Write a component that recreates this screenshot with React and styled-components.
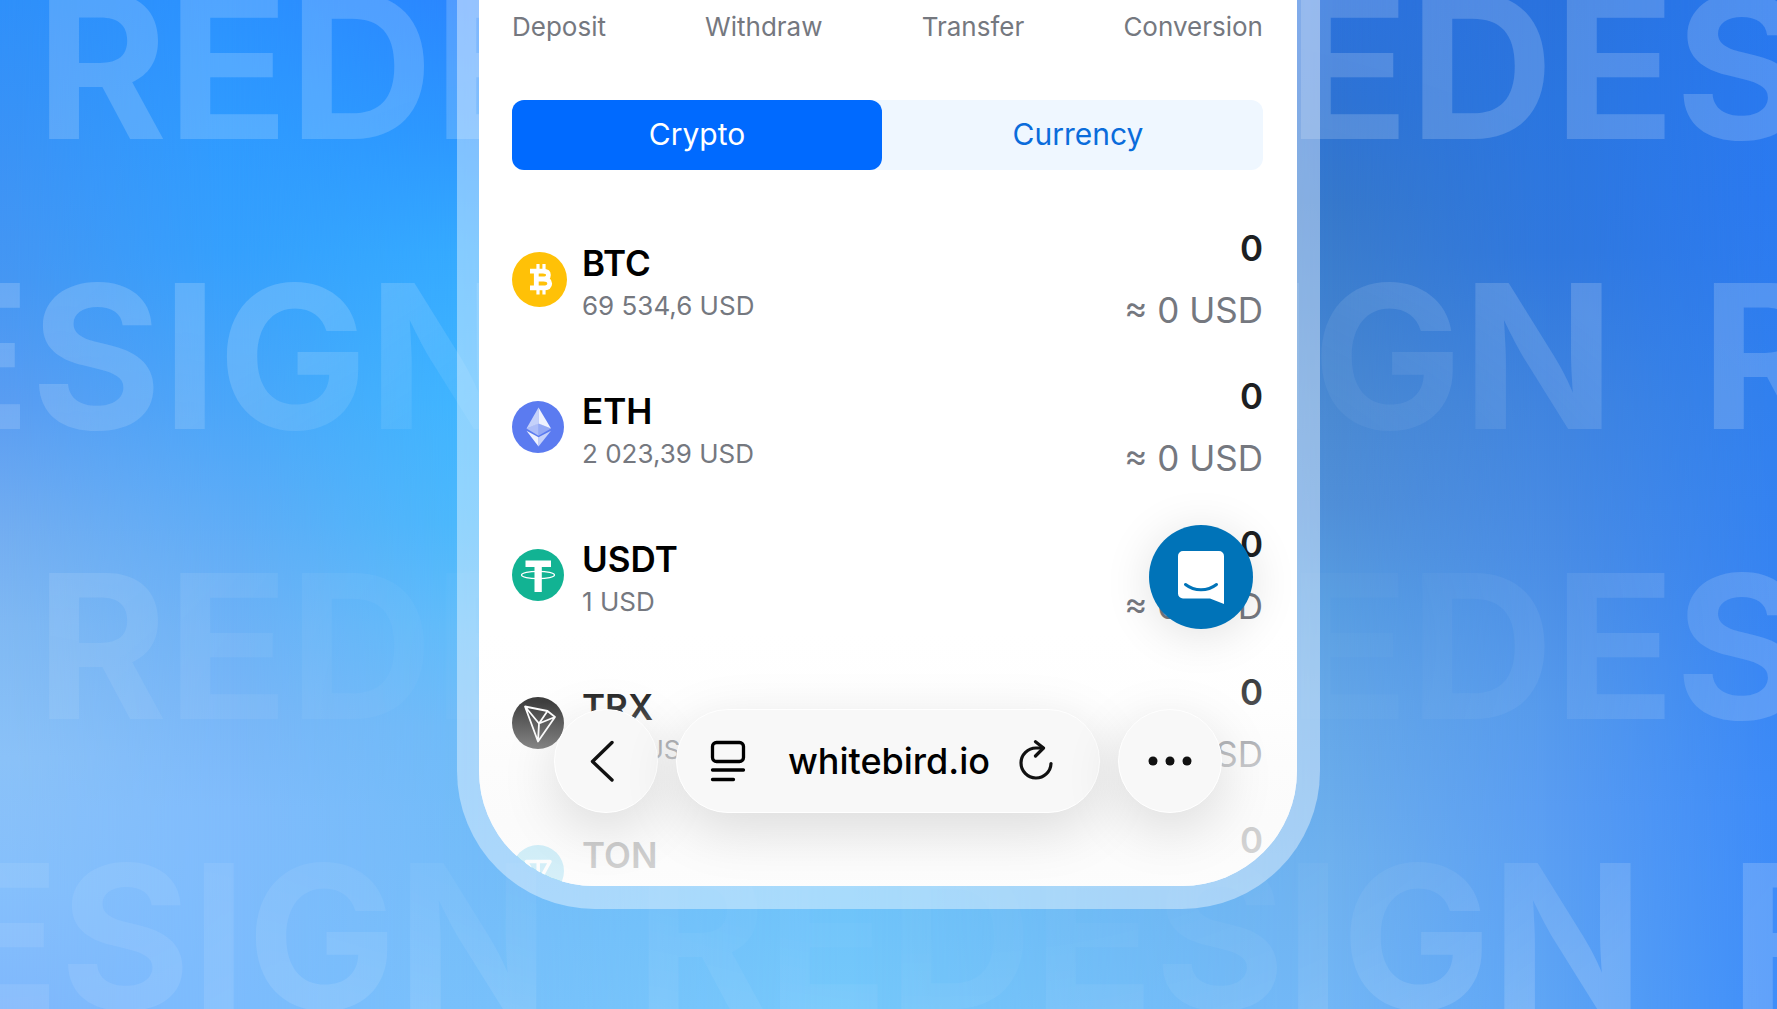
import { useState } from 'react';
import styled, { createGlobalStyle } from 'styled-components';

const GlobalStyle = createGlobalStyle`
	* {
		box-sizing: border-box;
	}

	body {
		margin: 0;
		font-family: Inter, 'Liberation Sans', sans-serif;
		background: #3c8cf8;
	}

	button {
		padding: 0;
		border: 0;
		background: none;
		font: inherit;
		cursor: pointer;
	}
`;

const actions = ['Deposit', 'Withdraw', 'Transfer', 'Conversion'];
const tabs = ['Crypto', 'Currency'];

const BtcIcon = () => (
	<svg width="55" height="55" viewBox="0 0 55 55" aria-hidden="true">
		<circle cx="27.5" cy="27.5" r="27.5" fill="#ffc107" />
		<g fill="none" stroke="#fff" strokeWidth="4.8">
			<path d="M18 19.200h13c3.600 0 5.400 1.400 5.400 3.900s-1.800 3.900-5.400 3.900h-6.500M18 35.800h13.500c4 0 6.200-1.600 6.200-4.400s-2.200-4.400-6.200-4.400h-7M24.300 19v17" />
			<path d="M26 12v6M32 12v6M26 37v5.500M32 37v5.500" strokeWidth="3.200" />
		</g>
	</svg>
);

const EthIcon = () => (
	<svg width="52" height="52" viewBox="0 0 52 52" aria-hidden="true">
		<circle cx="26" cy="26" r="26" fill="#5b7bf0" />
		<path fill="#fff" fillOpacity="0.65" d="M26.500 6.500v16L14.500 27.500z" />
		<path fill="#fff" fillOpacity="0.9" d="M26.500 6.500l12.500 21-12.500-5z" />
		<path fill="#fff" fillOpacity="0.5" d="M14.500 27.500l12-5.300v12.500z" />
		<path fill="#fff" fillOpacity="0.35" d="M39 27.500l-12.500-5.300v12.500z" />
		<path fill="#fff" fillOpacity="0.9" d="M14.500 29.700l12 6.500v9.300z" />
		<path fill="#fff" fillOpacity="0.65" d="M39 29.700l-12.500 6.500v9.300z" />
	</svg>
);

const UsdtIcon = () => (
	<svg width="52" height="52" viewBox="0 0 52 52" aria-hidden="true">
		<circle cx="26" cy="26" r="26" fill="#12b393" />
		<ellipse cx="26" cy="26" rx="16.500" ry="3.600" fill="none" stroke="#fff" strokeWidth="1.300" />
		<path fill="#fff" d="M13.500 11.500h25.500v6.500h-9.200v25H22.500v-25h-9z" />
	</svg>
);

const TrxIcon = () => (
	<svg width="52" height="52" viewBox="0 0 52 52" aria-hidden="true">
		<circle cx="26" cy="26" r="26" fill="#111" />
		<path
			d="M13 9.500l22.500 4.500 7.500 6-17 24.500zM13 9.500l14 17L26 44.500M27 26.500l8.500-12.500M27 26.500l16-6.500"
			fill="none"
			stroke="#fff"
			strokeWidth="1.800"
			strokeLinejoin="round"
		/>
	</svg>
);

const TonIcon = () => (
	<svg width="52" height="52" viewBox="0 0 52 52" aria-hidden="true">
		<circle cx="26" cy="26" r="26" fill="#12b0e6" />
		<path
			d="M14.500 16.500h23.500L26.200 38zM26.200 16.500V38"
			fill="none"
			stroke="#fff"
			strokeWidth="3.500"
			strokeLinejoin="round"
		/>
	</svg>
);

const coins = [
	{ name: 'BTC', rate: '69 534,6 USD', Icon: BtcIcon },
	{ name: 'ETH', rate: '2 023,39 USD', Icon: EthIcon },
	{ name: 'USDT', rate: '1 USD', Icon: UsdtIcon },
	{ name: 'TRX', rate: '0,29 USD', Icon: TrxIcon },
	{ name: 'TON', rate: '1,32 USD', Icon: TonIcon },
];

const Stage = styled.div`
	position: relative;
	display: flex;
	justify-content: center;
	height: 100vh;
	padding-bottom: 100px;
	overflow: hidden;
`;

// Vertical gradients blended into each other from left to right
const Backdrop = styled.div`
	position: absolute;
	inset: 0;
	background: linear-gradient(
		#2f90fa,
		#3b93f6 15%,
		#4697f3 28%,
		#5a9df2 40%,
		#72adf1 52%,
		#80b9f3 62%,
		#8bc2f8 75%,
		#86c0fc 88%,
		#80b8fc
	);
`;

const Blend = styled.div`
	position: absolute;
	inset: 0;
	background: linear-gradient(${({ $colors }) => $colors});
	mask-image: linear-gradient(
		90deg,
		transparent ${({ $from }) => $from}%,
		#000 ${({ $to }) => $to}%
	);
`;

const blends = [
	{
		from: 0,
		to: 13,
		colors: '#2b92ff, #2f9bff 13%, #35a0fd 25%, #4aa6f9 40%, #64aef6 55%, #78b6f7 70%, #80bcfc 80%, #7cbcfd',
	},
	{
		from: 13,
		to: 26,
		colors: '#2a86ff, #2c97ff 13%, #35aaff 25%, #40b5ff 40%, #4bb8fc 52%, #60bcfa 62%, #6fbbf8 72%, #74bcf9 85%, #78c0fb',
	},
	{
		from: 26,
		to: 48,
		colors: '#2a80f0, #2f90f0 25%, #4aa8f4 50%, #66bef8 75%, #75c8fb',
	},
	{
		from: 48,
		to: 75,
		colors: '#2c72dc, #2e73d4 10%, #3678cc 20%, #3f80cf 30%, #4a89d2 40%, #508fd8 50%, #589de2 60%, #64a6e8 70%, #6eb0ee 85%, #72b6f6',
	},
	{
		from: 75,
		to: 87,
		colors: '#2a72de, #2b76e0 10%, #3078de 25%, #4084df 40%, #4a8de5 55%, #569aec 70%, #5a9df2 80%, #5ea5f5',
	},
	{
		from: 87,
		to: 100,
		colors: '#2878ee, #2b7af0 20%, #3180ee 40%, #3784f2 60%, #3d8bf8 80%, #3f8ef9',
	},
];

const Words = styled.div`
	position: absolute;
	inset: 0;
	overflow: hidden;
	color: rgba(255, 255, 255, 0.18);
	font-size: 200px;
	font-weight: 700;
	line-height: 290px;
	mask-image: radial-gradient(
			ellipse 60% 66% at 53% 64%,
			rgba(0, 0, 0, 0.12) 44%,
			rgba(0, 0, 0, 0.4) 60%,
			rgba(0, 0, 0, 0.95) 78%,
			#000
		),
		radial-gradient(ellipse 40% 50% at 0 80%, rgba(0, 0, 0, 0.45) 30%, #000);
	mask-composite: intersect;
`;

const WordLine = styled.div`
	display: flex;
	gap: ${({ $gap }) => $gap}px;
	margin-left: ${({ $shift }) => $shift}px;

	&:first-child {
		margin-top: -79px;
	}
`;

const wordLines = [
	{ shift: 36, gap: 112, words: 2 },
	{ shift: -488, gap: 86, words: 3 },
	{ shift: 36, gap: 112, words: 2 },
	{ shift: -459, gap: 86, words: 3 },
];

const Phone = styled.main`
	position: relative;
	display: flex;
	width: 863px;
	padding: 0 23px 23px 22px;
	border-radius: 0 0 138px 138px;
	background: rgba(255, 255, 255, 0.4);
`;

const Screen = styled.div`
	position: relative;
	flex: 1;
	overflow: hidden;
	padding: 11px 34px 0 33px;
	border-radius: 0 0 115px 115px;
	background: #fff;
`;

const Actions = styled.nav`
	display: flex;
	justify-content: space-between;
	margin-bottom: 57px;
`;

const Action = styled.button`
	color: #75787f;
	font-size: 26px;
	line-height: 32px;
`;

const Tabs = styled.div`
	display: flex;
	gap: 11px;
	margin-bottom: 35px;
	border-radius: 12px;
	background: #eff7ff;
`;

const Tab = styled.button`
	flex: 1;
	height: 70px;
	padding-bottom: 2px;
	border-radius: 12px;
	background: ${({ $active }) => ($active ? '#006aff' : 'transparent')};
	color: ${({ $active }) => ($active ? '#fff' : '#0a6cdb')};
	font-size: 30px;
`;

const CoinList = styled.ul`
	margin: 0;
	padding: 0;
	list-style: none;
`;

const CoinRow = styled.li`
	display: grid;
	grid-template-columns: 54px 1fr auto;
	column-gap: 16px;
	align-items: center;
	height: 148px;

	svg {
		display: block;
	}
`;

const CoinInfo = styled.div`
	display: grid;
	gap: 9px;
	padding-top: 4px;
`;

const CoinName = styled.div`
	color: #000;
	font-size: 35px;
	font-weight: 600;
	line-height: 40px;
`;

const CoinRate = styled.div`
	color: #75787f;
	font-size: 26px;
	line-height: 28px;
`;

const Balance = styled.div`
	display: grid;
	gap: 22px;
	color: #1d1f22;
	font-size: 35px;
	font-weight: 600;
	line-height: 40px;
	text-align: right;
`;

const Estimate = styled.span`
	color: #75787f;
	font-weight: 400;
`;

const Fade = styled.div`
	position: absolute;
	inset: auto 0 0;
	height: 255px;
	background: linear-gradient(
		rgba(252, 252, 252, 0),
		rgba(251, 251, 251, 0.2) 28%,
		rgba(250, 250, 250, 0.6) 52%,
		rgba(250, 250, 250, 0.8) 76%,
		rgba(252, 252, 252, 0.84)
	);
	pointer-events: none;
`;

const ChatButton = styled.button`
	position: absolute;
	right: 44px;
	bottom: 257px;
	display: grid;
	place-items: center;
	width: 104px;
	height: 104px;
	border-radius: 50%;
	background: #0073b8;
	box-shadow: 0 6px 48px rgba(0, 0, 0, 0.12);
`;

const BrowserBar = styled.div`
	position: absolute;
	inset: auto 75px 73px;
	display: flex;
	gap: 18px;
	height: 104px;
`;

const glass = `
	border: 1px solid #fff;
	background: #f8f8f8;
	box-shadow: 0 16px 56px rgba(0, 0, 0, 0.13);
`;

const RoundButton = styled.button`
	display: grid;
	flex: none;
	place-items: center;
	width: 104px;
	border-radius: 50%;
	${glass}
`;

const AddressBar = styled.div`
	display: flex;
	flex: 1;
	align-items: center;
	justify-content: space-between;
	padding: 0 45px 0 33px;
	border-radius: 52px;
	color: #000;
	font-size: 36px;
	font-weight: 500;
	${glass}
`;

const AddressButton = styled.button`
	display: flex;
`;

const AddressLink = styled.a`
	margin-left: 14px;
	color: inherit;
	text-decoration: none;
`;

const App = () => {
	const [activeTab, setActiveTab] = useState('Crypto');

	return (
		<Stage>
			<GlobalStyle />
			<Backdrop aria-hidden="true">
				{blends.map(({ from, to, colors }) => (
					<Blend key={from} $from={from} $to={to} $colors={colors} />
				))}
				<Words>
					{wordLines.map(({ shift, gap, words }, line) => (
						<WordLine key={line} $shift={shift} $gap={gap}>
							{Array.from({ length: words }, (_, i) => (
								<span key={i}>REDESIGN</span>
							))}
						</WordLine>
					))}
				</Words>
			</Backdrop>
			<Phone>
				<Screen>
					<Actions>
						{actions.map((action) => (
							<Action key={action}>{action}</Action>
						))}
					</Actions>
					<Tabs>
						{tabs.map((tab) => (
							<Tab
								key={tab}
								$active={tab === activeTab}
								aria-pressed={tab === activeTab}
								onClick={() => setActiveTab(tab)}
							>
								{tab}
							</Tab>
						))}
					</Tabs>
					<CoinList>
						{coins.map(({ name, rate, Icon }) => (
							<CoinRow key={name}>
								<Icon />
								<CoinInfo>
									<CoinName>{name}</CoinName>
									<CoinRate>{rate}</CoinRate>
								</CoinInfo>
								<Balance>
									0<Estimate>≈ 0 USD</Estimate>
								</Balance>
							</CoinRow>
						))}
					</CoinList>
					<Fade />
					<ChatButton aria-label="Chat">
						<svg width="46" height="53" viewBox="0 0 46 53" aria-hidden="true">
							<path
								fill="#fff"
								d="M5 0h36a5 5 0 0 1 5 5v48l-14-5.500H5a5 5 0 0 1-5-5V5a5 5 0 0 1 5-5z"
							/>
							<path
								d="M7.500 33.500c9 7 22 7 31 0"
								fill="none"
								stroke="#0073b8"
								strokeWidth="3"
								strokeLinecap="round"
							/>
						</svg>
					</ChatButton>
					<BrowserBar>
						<RoundButton aria-label="Back">
							<svg width="32" height="42" viewBox="0 0 32 42" aria-hidden="true">
								<path
									d="M22 2.500L2.500 21.500 22 40"
									fill="none"
									stroke="#111"
									strokeWidth="3.400"
									strokeLinecap="round"
									strokeLinejoin="round"
								/>
							</svg>
						</RoundButton>
						<AddressBar>
							<AddressButton aria-label="Page settings">
								<svg width="36" height="42" viewBox="0 0 36 42" fill="none" stroke="#000" strokeWidth="3.300" strokeLinecap="round" aria-hidden="true">
									<rect x="2.500" y="2.500" width="31" height="19" rx="4" />
									<path d="M2.500 30h31M2.500 39.500h21" />
								</svg>
							</AddressButton>
							<AddressLink href="#">whitebird.io</AddressLink>
							<AddressButton aria-label="Reload">
								<svg width="36" height="42" viewBox="0 0 36 42" fill="none" stroke="#111" strokeWidth="3.200" strokeLinecap="round" strokeLinejoin="round" aria-hidden="true">
									<path d="M33 23.500a15 15 0 1 1-15-15.500h7" />
									<path d="M17.500 1.800l8 6.200-8 8" />
								</svg>
							</AddressButton>
						</AddressBar>
						<RoundButton aria-label="More">
							<svg width="44" height="10" viewBox="0 0 44 10" fill="#111" aria-hidden="true">
								<circle cx="5" cy="5" r="4.500" />
								<circle cx="22" cy="5" r="4.500" />
								<circle cx="39" cy="5" r="4.500" />
							</svg>
						</RoundButton>
					</BrowserBar>
				</Screen>
			</Phone>
		</Stage>
	);
};

export default App;
